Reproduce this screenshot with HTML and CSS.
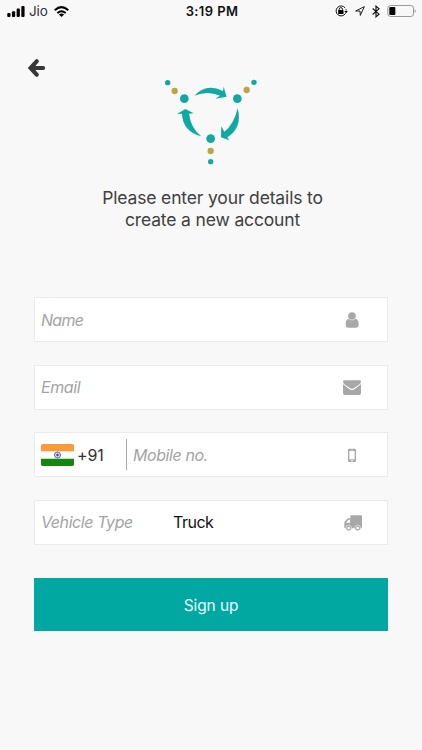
FILE: index.html
```html
<!DOCTYPE html>
<html lang="en">
<head>
<meta charset="utf-8">
<title>Sign up</title>
<link rel="stylesheet" href="styles.css">
</head>
<body>
<div class="screen">
  <header class="status">
    <div class="status-left">
      <svg class="signal" viewBox="0 0 54 34"><rect x="0" y="22" width="10" height="12" rx="3"/><rect x="14.500" y="16" width="10" height="18" rx="3"/><rect x="29" y="8" width="10" height="26" rx="3"/><rect x="43.500" y="0" width="10" height="34" rx="3"/></svg>
      <span class="carrier">Jio</span>
      <svg class="wifi" viewBox="0 0 46 34"><g fill="none" stroke="#000" stroke-width="6"><path d="M2 13Q23-6 44 13"/><path d="M10 22Q23 10 36 22"/></g><path d="M15 26Q23 20 31 26L23 34Z"/></svg>
    </div>
    <time class="clock">3:19 PM</time>
    <div class="status-right">
      <svg class="lock" viewBox="0 0 38 36"><g fill="none" stroke="#111" stroke-width="3"><path d="M30 9A15 15 0 1 0 31 25"/><path d="M12 16V13a5 5 0 0 1 10 0V16"/><path d="M32 12Q34 16 33 21" stroke-dasharray="3 2"/></g><rect x="9" y="15" width="16" height="12" rx="1"/><path d="M27 18H38L33 25Z"/></svg>
      <svg class="locate" viewBox="0 0 32 32"><path d="M2 16L30 2L17 30L16 16Z" fill="none" stroke="#111" stroke-width="3" stroke-linejoin="round"/></svg>
      <svg class="bluetooth" viewBox="0 0 24 38"><path d="M2 10L21 27L12 35V3L21 11L2 28" fill="none" stroke="#111" stroke-width="3.500"/></svg>
      <svg class="battery" viewBox="0 0 88 36"><rect x="1.500" y="1.500" width="77" height="33" rx="8" fill="none" stroke="#999" stroke-width="3"/><rect x="6" y="6" width="18" height="24" rx="3"/><path d="M82 12Q88 18 82 24Z" fill="#888"/></svg>
    </div>
  </header>
  <nav class="nav">
    <svg class="back" viewBox="0 0 51 54"><path d="M26 7L8 27L26 47M9 27H45" fill="none" stroke="#373737" stroke-width="12.500" stroke-linecap="round" stroke-linejoin="miter"/></svg>
  </nav>
  <svg class="logo" viewBox="0 0 345 315">
    <g fill="#10a9a2">
      <circle cx="38" cy="38" r="8"/><circle cx="88" cy="86" r="13"/><circle cx="247" cy="86" r="13"/><circle cx="297" cy="37" r="8"/><circle cx="167" cy="206" r="13"/><circle cx="167" cy="275" r="8"/>
      <path d="M118 77Q154 38 204 63L206 50L215 80L181 86L195 77Q158 61 118 77Z"/>
      <path d="M248 115Q263 174 217 202L223 211L198 202L199 169L208 185Q236 165 248 115Z"/>
      <path d="M139 199Q83 184 81 131L66 132L91 117L116 130L102 131Q108 175 139 199Z"/>
    </g>
    <g fill="#bea447"><circle cx="59" cy="63" r="9.500"/><circle cx="275" cy="60" r="9.500"/><circle cx="167" cy="243" r="9.500"/></g>
  </svg>
  <h1 class="title"><span class="line-one">Please enter your details to</span><br><span class="line-two">create a new account</span></h1>
  <form class="form">
    <div class="field"><span class="hint name">Name</span>
      <svg class="icon" viewBox="0 0 60 60"><circle cx="30" cy="18" r="11.500"/><path d="M19 26Q30 35 41 26Q50 28 50 44Q50 53 41 53H19Q11 53 11 44Q11 28 19 26Z"/></svg>
    </div>
    <div class="field"><span class="hint email">Email</span>
      <svg class="icon" viewBox="0 0 60 60"><path d="M7 10H53Q57 10 57 14Q56 19 50 24L35 34Q30 37 25 34L10 24Q4 19 3 14Q3 10 7 10Z"/><path d="M3 22L23 37Q30 42 37 37L57 22V49Q57 54 52 54H8Q3 54 3 49Z"/></svg>
    </div>
    <div class="field phone">
      <svg class="flag" viewBox="0 0 99 66"><clipPath id="round"><rect width="99" height="66" rx="5"/></clipPath><g clip-path="url(#round)"><path fill="#fff" d="M0 0H99V66H0Z"/><path fill="#fc9a3b" d="M0 0H99V22H0Z"/><path fill="#168611" d="M0 44H99V66H0Z"/></g><path d="M.5 22V44M98.500 22V44" stroke="#ddd"/><g fill="none" stroke="#42429c"><circle cx="49.500" cy="33" r="9" stroke-width="2.500"/><path d="M41 33H58M49.500 24V42M43 27L56 39M43 39L56 27" stroke-width="1"/></g><circle cx="49.500" cy="33" r="3.500" fill="#42429c"/></svg>
      <span class="code">+91</span>
      <span class="divider"></span>
      <span class="hint mobile">Mobile no.</span>
      <svg class="icon" viewBox="0 0 60 60"><path fill-rule="evenodd" d="M22 11H38Q42 11 42 15V47Q42 51 38 51H22Q18 51 18 47V15Q18 11 22 11ZM22 18V43H38V18ZM27 14V15.500H33V14ZM30 44.500A2.500 2.500 0 1 0 30 49.500A2.500 2.500 0 1 0 30 44.500Z"/></svg>
    </div>
    <div class="field"><span class="hint vehicle">Vehicle Type</span><span class="value">Truck</span>
      <svg class="icon" viewBox="0 0 60 60"><path fill-rule="evenodd" d="M28 10H57Q60 10 60 13V46Q60 49 57 49H9Q7 49 7 46V33Q7 30 9 28L15 21Q17 19 20 19H25V12Q25 10 28 10ZM13 32H24V23H20L13 31Z"/><g stroke="#fff" stroke-width="1.500"><circle cx="20" cy="48" r="8.500"/><circle cx="47" cy="48" r="8.500"/></g><circle cx="20" cy="48" r="4" fill="#fff"/><circle cx="47" cy="48" r="4" fill="#fff"/></svg>
    </div>
    <button class="submit" type="button"><span>Sign up</span></button>
  </form>
</div>
</body>
</html>
```
FILE: styles.css
```css
* { box-sizing: border-box; }
body { margin: 0; background: #f8f8f8; font-family: Inter, "Liberation Sans", sans-serif; }
svg { display: block; flex: none; }
.screen { width: 422px; height: 750px; overflow: hidden; display: flex; flex-direction: column; background: #f8f8f8; }
.status { height: 22px; flex: none; display: grid; grid-template-columns: 1fr auto 1fr; align-items: center; padding: 0 5px 0 7px; color: #111; }
.status-left, .status-right { display: flex; align-items: center; }
.status-right { justify-content: flex-end; }
.signal { width: 18px; height: 11px; }
.carrier { margin: 0 6px 0 4px; font-size: 13.5px; line-height: 20px; letter-spacing: -.1px; color: #333; }
.wifi { width: 15px; height: 11px; }
.clock { font-size: 13px; line-height: 20px; font-weight: 600; letter-spacing: .4px; }
.lock { width: 13px; height: 12px; margin-right: 7px; }
.locate { width: 10px; height: 10px; margin-right: 7px; }
.bluetooth { width: 8px; height: 13px; margin-right: 7px; }
.battery { width: 30px; height: 12px; }
.nav { height: 48px; flex: none; padding: 37px 0 0 28px; }
.back { width: 17px; height: 18px; }
.logo { width: 115px; height: 105px; margin-left: 155px; }
.title { margin: 12px 0 0; padding-left: 3px; text-align: center; font-size: 17.5px; line-height: 21.5px; font-weight: 400; letter-spacing: -.15px; color: #404040; }
.form { margin: 67px 34px 0; display: flex; flex-direction: column; }
.field { height: 45px; margin-bottom: 22.5px; display: flex; align-items: center; padding: 0 20px 0 6px; background: #fff; border: 1px solid #ebebeb; }
.hint { font-size: 16px; line-height: 24px; font-style: italic; letter-spacing: -.42px; color: #a3a3a3; white-space: nowrap; }
.name { letter-spacing: -.7px; }
.icon { width: 20px; height: 20px; margin-left: auto; margin-right: 5px; fill: #a8a8a8; }
.flag { width: 33px; height: 22px; }
.code { width: 49px; margin-left: 3px; font-size: 16px; line-height: 24px; letter-spacing: -.15px; color: #333; }
.divider { width: 1px; height: 31px; margin-right: 6px; background: #aaa; }
.vehicle { width: 132px; }
.value { font-size: 16px; line-height: 24px; letter-spacing: -.5px; color: #111; }
.submit { height: 53px; margin-top: 11px; padding: 2px 0 0; border: 0; background: #00a8a1; color: #e6ffff; font: 400 15.5px/24px Inter, "Liberation Sans", sans-serif; letter-spacing: -.1px; }
```
